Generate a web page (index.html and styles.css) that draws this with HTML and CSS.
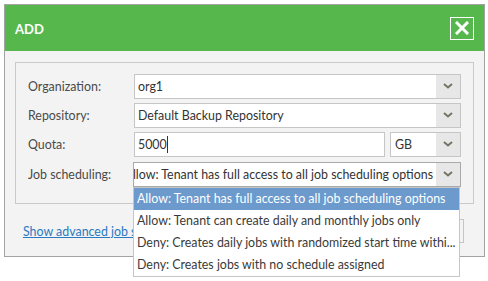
FILE: index.html
```html
<!DOCTYPE html>
<html>
<head>
<meta charset="utf-8">
<link rel="stylesheet" href="styles.css">
</head>
<body>
<div class="dialog">
  <div class="header">
    <span class="title">ADD</span>
    <button class="close" aria-label="Close">
      <svg width="14" height="14" viewBox="0 0 14 14"><path d="M2 2 L12 12 M12 2 L2 12" stroke="#fff" stroke-width="3" stroke-linecap="square"/></svg>
    </button>
  </div>
  <div class="body">
    <div class="fieldset">
      <div class="row">
        <label class="label">Organization:</label>
        <div class="select"><span class="value">org1</span><span class="arrow"><svg width="10" height="6" viewBox="0 0 10 6"><path d="M1 1 L5 4.5 L9 1" fill="none" stroke="#747466" stroke-width="2"/></svg></span></div>
      </div>
      <div class="row">
        <label class="label">Repository:</label>
        <div class="select"><span class="value">Default Backup Repository</span><span class="arrow"><svg width="10" height="6" viewBox="0 0 10 6"><path d="M1 1 L5 4.5 L9 1" fill="none" stroke="#747466" stroke-width="2"/></svg></span></div>
      </div>
      <div class="row">
        <label class="label">Quota:</label>
        <div class="quota">
          <div class="input"><span class="value">5000</span><span class="caret"></span></div>
          <div class="select unit"><span class="value">GB</span><span class="arrow"><svg width="10" height="6" viewBox="0 0 10 6"><path d="M1 1 L5 4.5 L9 1" fill="none" stroke="#747466" stroke-width="2"/></svg></span></div>
        </div>
      </div>
      <div class="row">
        <label class="label">Job scheduling:</label>
        <div class="select open"><span class="value clip"><span>Allow: Tenant has full access to all job scheduling options</span></span><span class="arrow"><svg width="10" height="6" viewBox="0 0 10 6"><path d="M1 1 L5 4.5 L9 1" fill="none" stroke="#747466" stroke-width="2"/></svg></span></div>
      </div>
    </div>
    <div class="footer">
      <a class="link" href="#">Show advanced job settings</a>
      <button class="btn" aria-label="Advanced"></button>
    </div>
  </div>
</div>
<ul class="menu">
  <li class="selected">Allow: Tenant has full access to all job scheduling options</li>
  <li>Allow: Tenant can create daily and monthly jobs only</li>
  <li>Deny: Creates daily jobs with randomized start time withi...</li>
  <li>Deny: Creates jobs with no schedule assigned</li>
</ul>
</body>
</html>
```
FILE: styles.css
```css
* { box-sizing: border-box; }
html, body { margin: 0; padding: 0; background: #fff; }
body { position: relative; padding: 4px; min-height: 281px; font-family: "Lato", "Open Sans", sans-serif; font-size: 12.4px; color: #444; }

.dialog {
  width: 481px;
  height: 253px;
  border: 1px solid #a3a3a3;
  background: #f3f3f3;
  display: flex;
  flex-direction: column;
}
.header {
  height: 46px;
  background: #56b84c;
  display: flex;
  align-items: center;
  justify-content: space-between;
  padding: 0 10px 0 10px;
  flex-shrink: 0;
}
.title { color: #fff; font-weight: 700; font-size: 13px; margin-top: 2px; }
.close {
  width: 24px; height: 23px;
  border: 1px solid #fff;
  background: transparent;
  padding: 0;
  display: flex; align-items: center; justify-content: center;
}
.body { padding: 11px 10px 0 10px; flex: 1; display: flex; flex-direction: column; }
.fieldset {
  border: 1px solid #c9c9c9;
  height: 142px;
  padding: 11px 12px 0 12px;
  display: flex; flex-direction: column; gap: 5px;
}
.row { display: flex; align-items: center; height: 24px; }
.row:nth-child(4) { margin-top: 1px; }
.label { width: 106px; flex-shrink: 0; color: #4a4a4a; }
.select, .input {
  flex: 1;
  min-width: 0;
  height: 25px;
  border: 1px solid #c6c6c6;
  background: #fff;
  display: flex;
  align-items: stretch;
}
.value { flex: 1; min-width: 0; display: flex; align-items: center; padding-left: 3px; color: #333; white-space: nowrap; overflow: hidden; }
.arrow { width: 24px; background: #e7e7e7; display: flex; align-items: center; justify-content: center; flex-shrink: 0; }
.quota { flex: 1; display: flex; gap: 5px; }
.input { flex: 0 0 251px; }
.input .value { flex: 0 0 auto; }
.caret { width: 1px; height: 17px; background: #333; align-self: center; }
.unit { flex: 1; }
.unit .value { padding-left: 4px; }
.open { border-color: #a9a9a9; margin-left: -1px; }
.clip { justify-content: flex-end; padding-right: 3px; padding-left: 3px; }
.clip span { flex-shrink: 0; }

.menu {
  position: absolute;
  left: 133px;
  top: 187px;
  width: 327px;
  margin: 0; padding: 0;
  list-style: none;
  background: #fff;
  border: 1px solid #c6c6c6;
  z-index: 5;
}
.menu li { height: 22px; line-height: 22px; padding: 0 4px 0 3px; color: #3a3a3a; white-space: nowrap; overflow: hidden; }
.menu li.selected { background: #6c9acc; color: #fff; }

.footer { display: flex; align-items: center; justify-content: space-between; padding: 15px 10px 0 8px; }
.link { color: #2a79c1; text-decoration: underline; }
.btn {
  height: 24px; width: 80px;
  border: 1px solid #c6c6c6; background: #f3f3f3;
}
```
